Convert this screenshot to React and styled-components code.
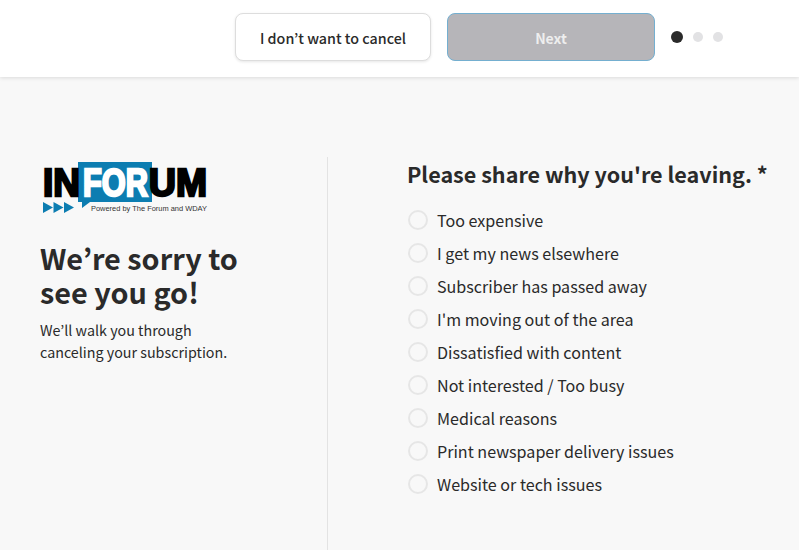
import React from "react";
import styled, { createGlobalStyle } from "styled-components";

const GlobalStyle = createGlobalStyle`
    html, body {
        margin: 0;
        padding: 0;
        height: 100%;
        overflow: hidden;
        background: #f8f8f8;
    }
    * {
        box-sizing: border-box;
    }
`;

const Page = styled.div`
    width: 799px;
    height: 550px;
    display: flex;
    flex-direction: column;
    font-family: "Noto Sans CJK JP", "Noto Sans", sans-serif;
    color: #2a2a2a;
    background: #f8f8f8;
    overflow: hidden;
`;

const Header = styled.header`
    flex: 0 0 77px;
    display: flex;
    align-items: flex-start;
    padding: 13px 0 0 235px;
    background: #fff;
    box-shadow: 0 1px 4px rgba(0, 0, 0, 0.12);
`;

const CancelButton = styled.button`
    width: 196px;
    height: 48px;
    margin-right: 16px;
    padding: 1px 0 0;
    border: 1px solid #ddd;
    border-radius: 8px;
    background: #fff;
    box-shadow: 0 1px 3px rgba(0, 0, 0, 0.1);
    color: #2a2a2a;
    font: 500 14.3px "Noto Sans CJK JP", sans-serif;
`;

const NextButton = styled.button`
    width: 208px;
    height: 48px;
    margin-right: 16px;
    padding: 1px 0 0;
    border: 1px solid #74afd0;
    border-radius: 8px;
    background: #b6b5b9;
    color: #eeeeee;
    font: 700 14px "Noto Sans CJK JP", sans-serif;
`;

const Dots = styled.div`
    display: flex;
    align-items: center;
    gap: 10px;
    height: 48px;
`;

const Dot = styled.span`
    width: ${({ active }) => (active ? "12px" : "10px")};
    height: ${({ active }) => (active ? "12px" : "10px")};
    border-radius: 50%;
    background: ${({ active }) => (active ? "#2a2a2a" : "#e2e2e4")};
`;

const Main = styled.main`
    flex: 1;
    display: flex;
    padding-top: 80px;
`;

const Intro = styled.section`
    width: 328px;
    padding: 5px 0 0 40px;
    border-right: 1px solid #e3e3e3;
`;

const Logo = styled.svg`
    display: block;
    width: 170px;
    height: 55px;
    margin-bottom: 24px;
`;

const Title = styled.h1`
    margin: 0 0 10px;
    font-size: 28.8px;
    line-height: 34px;
    font-weight: 700;
`;

const Lead = styled.p`
    margin: 0;
    font-size: 14.3px;
    line-height: 22px;
`;

const Survey = styled.section`
    padding-left: 79px;
`;

const Question = styled.h2`
    margin: 0 0 14px;
    font-size: 21.55px;
    line-height: 33px;
    font-weight: 700;
    white-space: nowrap;
`;

const Options = styled.div`
    display: flex;
    flex-direction: column;
    margin-top: -1px;
`;

const Option = styled.label`
    display: flex;
    align-items: center;
    height: 33px;
    font-size: 16.1px;
`;

const Radio = styled.span`
    width: 20px;
    height: 20px;
    margin: 0 9px 0 1px;
    border: 2px solid #e6e6e6;
    border-radius: 50%;
`;

const reasons = [
    "Too expensive",
    "I get my news elsewhere",
    "Subscriber has passed away",
    "I'm moving out of the area",
    "Dissatisfied with content",
    "Not interested / Too busy",
    "Medical reasons",
    "Print newspaper delivery issues",
    "Website or tech issues",
];

const InforumLogo = () => (
    <Logo viewBox="0 0 170 55">
        <path d="M38 0H112V40H50L42 46V40H38Z" fill="#0c7db1" />
        <text x="3" y="34" fontFamily="Liberation Sans" fontWeight="700" fontSize="38" stroke="#000" strokeWidth="2.4" textLength="37" lengthAdjust="spacingAndGlyphs" fill="#000">IN</text>
        <text x="43" y="34" fontFamily="Liberation Sans" fontWeight="700" fontSize="38" stroke="#fff" strokeWidth="2.4" textLength="65" lengthAdjust="spacingAndGlyphs" fill="#fff">FOR</text>
        <text x="109" y="34" fontFamily="Liberation Sans" fontWeight="700" fontSize="38" stroke="#000" strokeWidth="2.4" textLength="58" lengthAdjust="spacingAndGlyphs" fill="#000">UM</text>
        <path d="M3 40L13 45.5L3 51ZM13.5 40L23.5 45.5L13.5 51ZM24 40L34 45.5L24 51Z" fill="#0c7db1" />
        <text x="51" y="49" fontFamily="Liberation Sans" fontSize="7.5" textLength="116" lengthAdjust="spacingAndGlyphs" fill="#333">Powered by The Forum and WDAY</text>
    </Logo>
);

export default function App() {
    return (
        <Page>
            <GlobalStyle />
            <Header>
                <CancelButton>I don’t want to cancel</CancelButton>
                <NextButton>Next</NextButton>
                <Dots>
                    <Dot active />
                    <Dot />
                    <Dot />
                </Dots>
            </Header>
            <Main>
                <Intro>
                    <InforumLogo />
                    <Title>We’re sorry to<br />see you go!</Title>
                    <Lead>We’ll walk you through<br />canceling your subscription.</Lead>
                </Intro>
                <Survey>
                    <Question>Please share why you're leaving. *</Question>
                    <Options>
                        {reasons.map((reason) => (
                            <Option key={reason}>
                                <Radio />
                                {reason}
                            </Option>
                        ))}
                    </Options>
                </Survey>
            </Main>
        </Page>
    );
}
